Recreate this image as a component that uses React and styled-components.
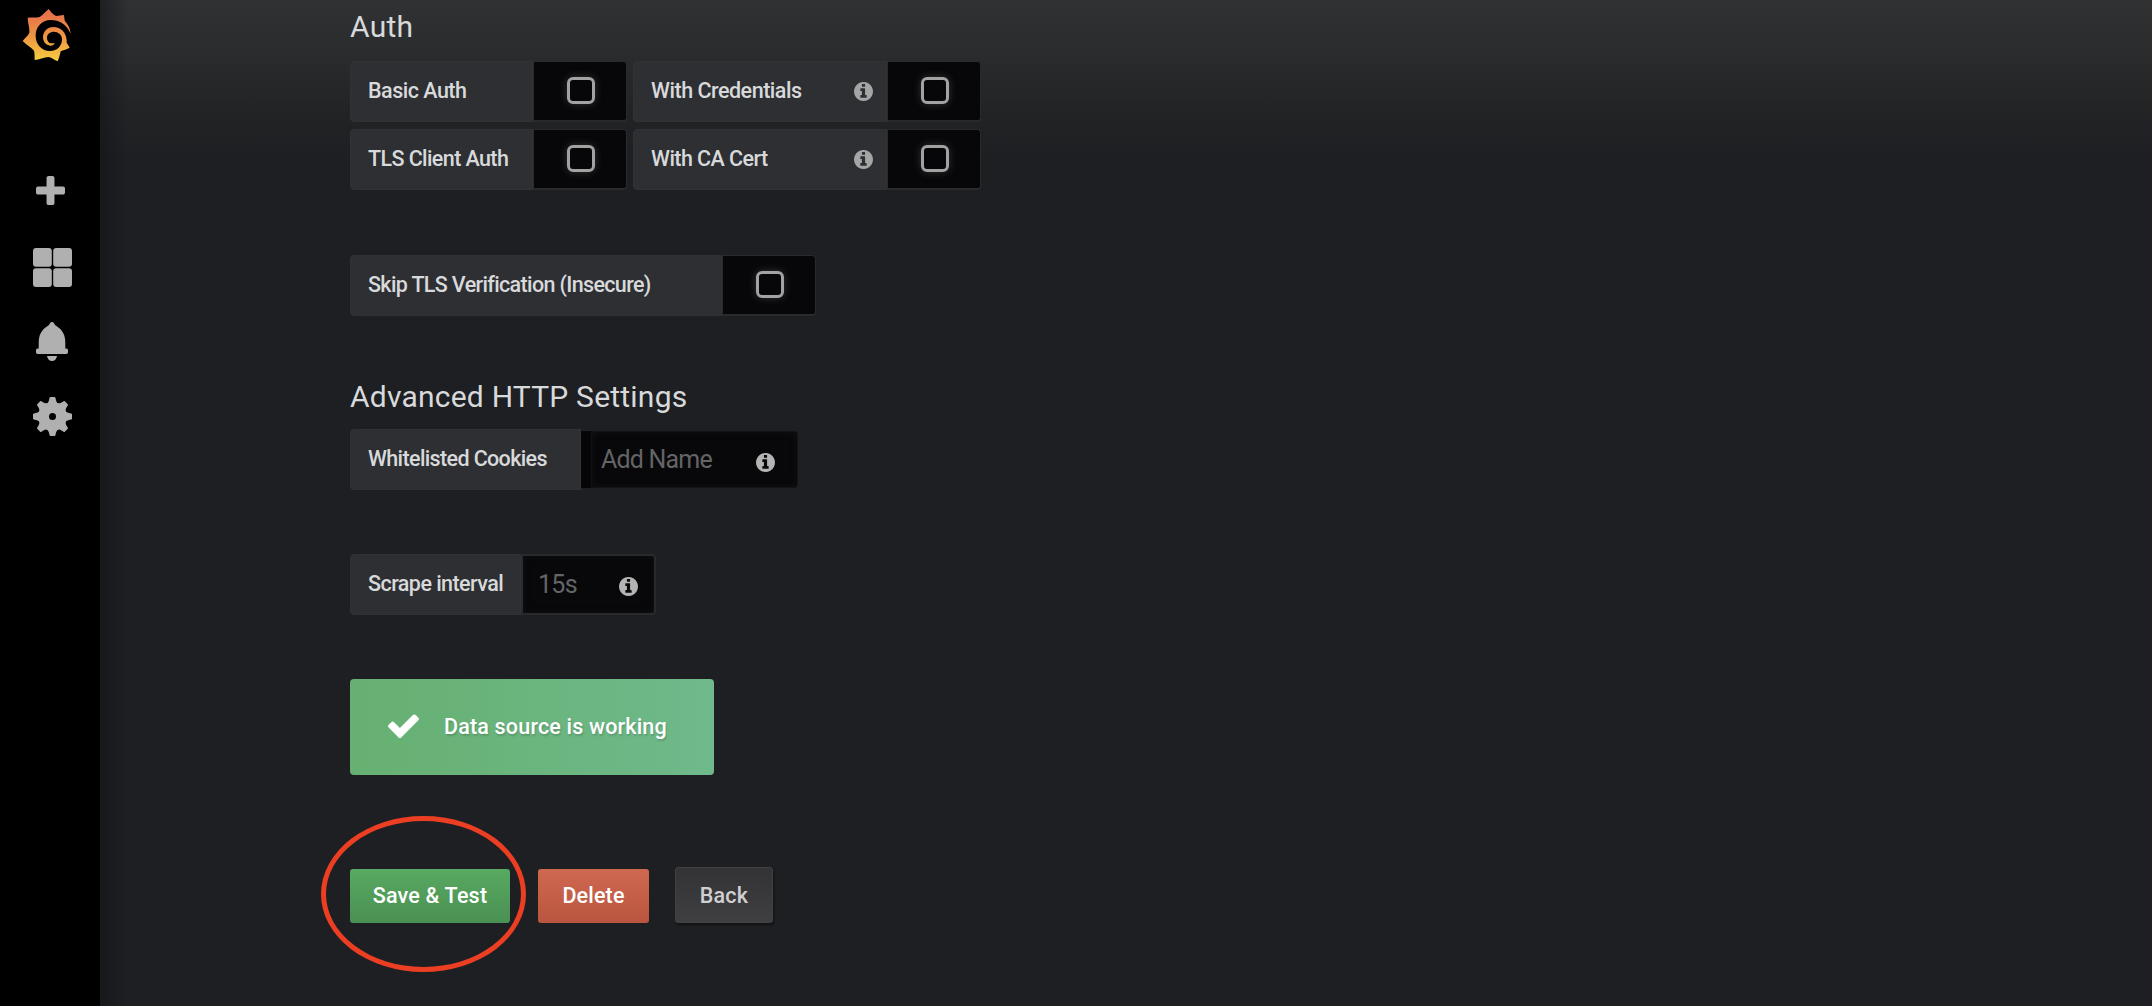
import React from "react";
import styled, { createGlobalStyle } from "styled-components";

const GlobalStyle = createGlobalStyle`
  * { box-sizing: border-box; }
  body { margin: 0; background: #1f2023; font-family: Roboto, "Liberation Sans", sans-serif; }
`;

const Page = styled.div`
  display: flex;
  height: 1006px;
  overflow: hidden;
  color: #d8d9da;
`;

const Sidebar = styled.nav`
  width: 100px;
  flex: none;
  background: #000;
  display: flex;
  flex-direction: column;
  align-items: flex-start;
`;

const Logo = styled.svg`
  display: block;
  flex: none;
  width: 50px;
  height: 54px;
  margin: 8px 0 0 22px;
`;

const NavIcon = styled.svg`
  display: block;
  flex: none;
  width: ${(p) => p.$w}px;
  height: ${(p) => p.$h}px;
  margin: ${(p) => p.$top}px 0 0 ${(p) => p.$left}px;
  fill: #b0b0b0;
`;

const Main = styled.main`
  flex: 1;
  display: flex;
  flex-direction: column;
  align-items: flex-start;
  padding-left: 250px;
  background:
    linear-gradient(90deg, rgba(18, 19, 24, 0.6) 0, rgba(18, 19, 24, 0) 28px),
    linear-gradient(180deg, #303133 0, #2b2c2e 50px, #232426 105px, #1e1f22 160px);
`;

const Heading = styled.h3`
  margin: ${(p) => p.$top}px 0 0;
  height: 40px;
  line-height: 40px;
  font-size: 30px;
  font-weight: 400;
  letter-spacing: 0.22px;
  white-space: nowrap;
`;

const Row = styled.div`
  display: flex;
  align-items: flex-start;
  margin-top: ${(p) => p.$top}px;
`;

const Label = styled.label`
  display: flex;
  align-items: center;
  justify-content: space-between;
  width: ${(p) => p.$w}px;
  height: 61px;
  padding: 0 13px 2px 17px;
  background: #2d2f33;
  border: 1px solid #303235;
  border-radius: 4px 0 0 4px;
  font-size: 21.5px;
  font-weight: 500;
  letter-spacing: ${(p) => p.$ls || 0}px;
  white-space: nowrap;
`;

const Switch = styled.div`
  display: flex;
  align-items: center;
  justify-content: center;
  width: 94px;
  height: 61px;
  margin-right: 6px;
  padding: 0 0 2px 2px;
  background: #070709;
  border: solid #292a2c;
  border-width: 1px 1px 2px 1px;
  border-radius: 0 4px 4px 0;
`;

const Box = styled.span`
  width: 28px;
  height: 27px;
  border: 3px solid #a2a2a2;
  border-radius: 6px;
  box-shadow: 0 0 9px rgba(150, 150, 150, 0.3);
`;

const InfoSvg = styled.svg`
  display: block;
  width: 19px;
  height: 19px;
  flex: none;
  margin-top: ${(p) => p.$drop || 0}px;
  fill: ${(p) => p.$color || "#a5a5a6"};
`;

const Field = styled.div`
  display: flex;
  align-items: center;
  justify-content: space-between;
  width: ${(p) => p.$w}px;
  height: ${(p) => p.$h}px;
  margin-top: ${(p) => p.$top || 0}px;
  padding: ${(p) => p.$pad};
  background: #08080a;
  border: ${(p) => (p.$framed ? "2px solid #292a2d" : "1px solid #121315")};
  border-left-width: ${(p) => (p.$framed ? 2 : 0)}px;
  border-radius: 0 4px 4px 0;
  box-shadow: inset 0 0 6px #111214;
`;

const Tags = styled.div`
  width: 11px;
  height: 57px;
  margin-top: 2px;
  background: #060608;
  border-right: 1px solid #101113;
`;

const Placeholder = styled.span`
  font-size: 25px;
  color: #636466;
  letter-spacing: ${(p) => p.$ls || 0}px;
  white-space: nowrap;
`;

const Alert = styled.div`
  display: flex;
  align-items: center;
  width: 364px;
  height: 96px;
  margin-top: 64px;
  padding: 0 0 2px 38px;
  gap: 25px;
  border-radius: 4px;
  background: linear-gradient(90deg, #66b072, #6fb98b);
  color: #fff;
  font-size: 21.5px;
  font-weight: 500;
  letter-spacing: 0.18px;
  white-space: nowrap;
  text-shadow: 1px 2px 2px rgba(0, 0, 0, 0.15);
`;

const Check = styled.svg`
  width: 31px;
  height: 24px;
  fill: #fff;
`;

const Actions = styled.div`
  position: relative;
  display: flex;
  align-items: flex-end;
  margin-top: 92px;
`;

const tones = {
  save: "linear-gradient(180deg, #58a961, #4a9052)",
  remove: "linear-gradient(180deg, #d06851, #b9553e)",
  back: "linear-gradient(180deg, #333335, #3f3f41)",
};

const Button = styled.button`
  width: ${(p) => p.$w}px;
  height: ${(p) => (p.$tone === "back" ? 56 : 54)}px;
  margin: 0 ${(p) => p.$gap || 0}px 0 0;
  padding: ${(p) => (p.$tone === "back" ? 2 : 0)}px 0 1px;
  border: ${(p) => (p.$tone === "back" ? "1px solid #424244" : "0")};
  border-radius: 3px;
  background: ${(p) => tones[p.$tone]};
  color: ${(p) => (p.$tone === "back" ? "#d0d0d2" : "#fff")};
  box-shadow: ${(p) => (p.$tone === "back" ? "1px 2px 2px #111214" : "none")};
  font: 500 21.5px Roboto, "Liberation Sans", sans-serif;
  letter-spacing: ${(p) => p.$ls || 0}px;
  white-space: nowrap;
`;

const Highlight = styled.span`
  position: absolute;
  left: -29px;
  top: -51px;
  width: 205px;
  height: 156px;
  border: 5px solid #ec3e23;
  border-radius: 50%;
`;

const Info = ({ color, drop }) => (
  <InfoSvg $color={color} $drop={drop} viewBox="128 128 1536 1536">
    <path d="M1152 1376v-160q0-14-9-23t-23-9h-96v-512q0-14-9-23t-23-9h-320q-14 0-23 9t-9 23v160q0 14 9 23t23 9h96v320h-96q-14 0-23 9t-9 23v160q0 14 9 23t23 9h448q14 0 23-9t9-23zm-128-896v-160q0-14-9-23t-23-9h-192q-14 0-23 9t-9 23v160q0 14 9 23t23 9h192q14 0 23-9t9-23zm640 416q0 209-103 385.5t-279.5 279.5-385.5 103-385.5-103-279.5-279.5-103-385.5 103-385.5 279.5-279.5 385.5-103 385.5 103 279.5 279.5 103 385.5z" />
  </InfoSvg>
);

const Toggle = ({ label, width, info, spacing }) => (
  <>
    <Label $w={width} $ls={spacing}>
      {label}
      {info && <Info drop={2} />}
    </Label>
    <Switch>
      <Box />
    </Switch>
  </>
);

export default function App() {
  return (
    <Page>
      <GlobalStyle />
      <Sidebar>
        <Logo viewBox="66 24 150 162">
          <defs>
            <linearGradient id="sun" x1="0" y1="0" x2="0" y2="1">
              <stop offset="0.1" stopColor="#e8734a" />
              <stop offset="0.55" stopColor="#ee9843" />
              <stop offset="1" stopColor="#f6cf3f" />
            </linearGradient>
          </defs>
          <path
            fill="url(#sun)"
            d="M146 27C151 34 158 43 168 48C176 47 184 46 192 45C193 52 193 58 195 64C204 73 211 87 212 101C207 90 193 61 153 60C124 60 107 82 107 107C107 134 126 153 150 153C172 153 187 136 186 116C185 103 173 94 160 95C148 96 141 104 141 113C141 122 147 130 155 130C158 130 161 129 164 129C163 134 158 137 151 137C138 136 129 125 129 112C129 95 142 81 160 81C183 81 199 98 200 121L200 128C203 133 207 138 209 143C201 148 190 150 182 154C180 164 177 175 173 184C164 181 156 173 146 171C132 171 117 180 104 180C103 170 105 158 101 151C91 140 76 133 68 123C74 115 84 107 88 98C90 84 83 68 83 53C95 52 108 54 119 51C129 45 137 34 146 27Z"
          />
        </Logo>
        <NavIcon $w={29} $h={29} $top={114} $left={36} viewBox="192 128 1408 1408">
          <path d="M1600 736v192q0 40-28 68t-68 28h-416v416q0 40-28 68t-68 28h-192q-40 0-68-28t-28-68v-416h-416q-40 0-68-28t-28-68v-192q0-40 28-68t68-28h416v-416q0-40 28-68t68-28h192q40 0 68 28t28 68v416h416q40 0 68 28t28 68z" />
        </NavIcon>
        <NavIcon $w={39} $h={39} $top={43} $left={33} viewBox="0 0 39 39">
          <rect x="0" y="0" width="18.8" height="18.8" rx="3" />
          <rect x="20.2" y="0" width="18.8" height="18.8" rx="3" />
          <rect x="0" y="20.2" width="18.8" height="18.8" rx="3" />
          <rect x="20.2" y="20.2" width="18.8" height="18.8" rx="3" />
        </NavIcon>
        <NavIcon $w={32} $h={39} $top={35} $left={36} viewBox="0 0 32 39">
          <path d="M16 0C14.600 0 13.800 1 13.400 2.400C11.800 4.200 9.400 5.200 7.400 7.200C4 10.800 2.700 15.500 2.700 20.500V26.600H1.600A1.600 1.600 0 0 0 0 28.200V30.300A1.600 1.600 0 0 0 1.600 31.900H30.400A1.600 1.600 0 0 0 32 30.300V28.200A1.600 1.600 0 0 0 30.400 26.600H29.300V20.500C29.300 15.500 28 10.800 24.600 7.200C22.600 5.200 20.200 4.200 18.600 2.400C18.200 1 17.400 0 16 0Z" />
          <path d="M11 34H21C20.500 37 18.600 39 16 39S11.500 37 11 34Z" />
        </NavIcon>
        <NavIcon $w={39} $h={39} $top={36} $left={33} viewBox="-19.5 -19.5 39 39">
          <circle r="10" fill="none" stroke="#b0b0b0" strokeWidth="8.500" />
          <circle r="5" fill="none" stroke="#b0b0b0" strokeWidth="3" />
          {[0, 45, 90, 135, 180, 225, 270, 315].map((a) => (
            <path
              key={a}
              transform={`rotate(${a})`}
              d="M-6 -12.500C-4.200 -14 -3.500 -15.500 -3 -18.600Q-2.800 -19.500 -2 -19.500H2Q2.800 -19.500 3 -18.600C3.500 -15.500 4.200 -14 6 -12.500Z"
            />
          ))}
        </NavIcon>
      </Sidebar>
      <Main>
        <Heading $top={7}>Auth</Heading>
        <Row $top={14}>
          <Toggle label="Basic Auth" width={183} spacing={-0.5} />
          <Toggle label="With Credentials" width={254} spacing={-0.48} info />
        </Row>
        <Row $top={7}>
          <Toggle label="TLS Client Auth" width={183} spacing={-0.6} />
          <Toggle label="With CA Cert" width={254} spacing={-0.55} info />
        </Row>
        <Row $top={65}>
          <Toggle label="Skip TLS Verification (Insecure)" width={372} spacing={-0.65} />
        </Row>
        <Heading $top={61}>Advanced HTTP Settings</Heading>
        <Row $top={12}>
          <Label $w={231} $ls={-0.63}>Whitelisted Cookies</Label>
          <Tags />
          <Field $w={206} $h={57} $top={2} $pad="0 22px 0 9px">
            <Placeholder $ls={-0.8}>Add Name</Placeholder>
            <Info color="#b4b4b4" drop={5} />
          </Field>
        </Row>
        <Row $top={64}>
          <Label $w={171} $ls={-0.55}>Scrape interval</Label>
          <Field $w={135} $h={61} $pad="0 16px 0 15px" $framed>
            <Placeholder $ls={-0.7}>15s</Placeholder>
            <Info color="#b4b4b4" drop={4} />
          </Field>
        </Row>
        <Alert>
          <Check viewBox="121 314 1550 1208">
            <path d="M1671 566q0 40-28 68l-724 724-136 136q-28 28-68 28t-68-28l-136-136-362-362q-28-28-28-68t28-68l136-136q28-28 68-28t68 28l294 295 656-657q28-28 68-28t68 28l136 136q28 28 28 68z" />
          </Check>
          Data source is working
        </Alert>
        <Actions>
          <Button $tone="save" $w={160} $gap={28} $ls={0.2}>Save &amp; Test</Button>
          <Button $tone="remove" $w={111} $gap={26} $ls={0.15}>Delete</Button>
          <Button $tone="back" $w={98} $ls={0.2}>Back</Button>
          <Highlight />
        </Actions>
      </Main>
    </Page>
  );
}
